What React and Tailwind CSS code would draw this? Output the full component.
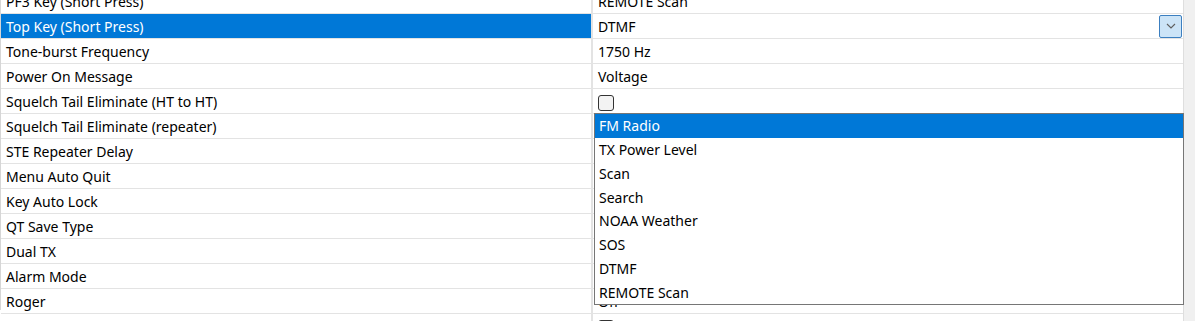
import React from "react";

const rows = [
  { label: "PF3 Key (Short Press)", value: "REMOTE Scan" },
  { label: "Top Key (Short Press)", value: "DTMF", selected: true },
  { label: "Tone-burst Frequency", value: "1750 Hz" },
  { label: "Power On Message", value: "Voltage" },
  { label: "Squelch Tail Eliminate (HT to HT)", check: true },
  { label: "Squelch Tail Eliminate (repeater)", value: "" },
  { label: "STE Repeater Delay", value: "" },
  { label: "Menu Auto Quit", value: "" },
  { label: "Key Auto Lock", value: "" },
  { label: "QT Save Type", value: "" },
  { label: "Dual TX", value: "" },
  { label: "Alarm Mode", value: "" },
  { label: "Roger", value: "Off" },
  { label: "Alarm Sound", check: true },
];

const options = [
  "FM Radio",
  "TX Power Level",
  "Scan",
  "Search",
  "NOAA Weather",
  "SOS",
  "DTMF",
  "REMOTE Scan",
];

function Checkbox() {
  return (
    <div className="w-[16px] h-[16px] mt-[2px] rounded-[3px] border border-[#333333] bg-[#f3f3f3]" />
  );
}

export default function App() {
  return (
    <div className="relative w-[1195px] h-[321px] overflow-hidden bg-white flex text-[14px] leading-[18px] text-black font-['Noto_Sans',sans-serif]">
      <div className="w-[1183px] h-full flex flex-col mt-[-11px] border-l border-[#d6d6d6]">
        {rows.map((r, i) => (
          <div key={i} className="h-[25px] shrink-0 flex border-b border-[#e3e3e3]">
            <div
              className={
                "w-[592px] shrink-0 flex items-center pl-[5px] pt-[1px] border-r-2 border-[#e3e3e3] whitespace-nowrap " +
                (r.selected ? "bg-[#0078d7] text-white" : "")
              }
            >
              {r.label}
            </div>
            <div className="flex-1 flex items-center justify-between pl-[5px] pt-[1px]">
              {r.check ? <Checkbox /> : <span className="whitespace-nowrap">{r.value}</span>}
              {r.selected && (
                <div className="w-[23px] h-[23px] mr-[1px] -mt-[1px] rounded-[2px] border border-[#3c7fc0] bg-[#cce4f7] flex items-center justify-center">
                  <svg width="10" height="6" viewBox="0 0 10 6">
                    <path d="M1 1 L5 5 L9 1" fill="none" stroke="#5f5f5f" strokeWidth="1.1" />
                  </svg>
                </div>
              )}
            </div>
          </div>
        ))}
      </div>
      <div className="w-[12px] h-full bg-[#f0f0f0] border-l border-[#dedede]" />

      <div className="absolute left-[594px] top-[113px] w-[590px] h-[192px] bg-white border border-[#767676] flex flex-col">
        {options.map((o, i) => (
          <div
            key={o}
            className={
              "h-[23.75px] shrink-0 flex items-center pl-[4px] pt-[1px] whitespace-nowrap " +
              (i === 0 ? "bg-[#0078d7] text-white" : "")
            }
          >
            {o}
          </div>
        ))}
      </div>
    </div>
  );
}
